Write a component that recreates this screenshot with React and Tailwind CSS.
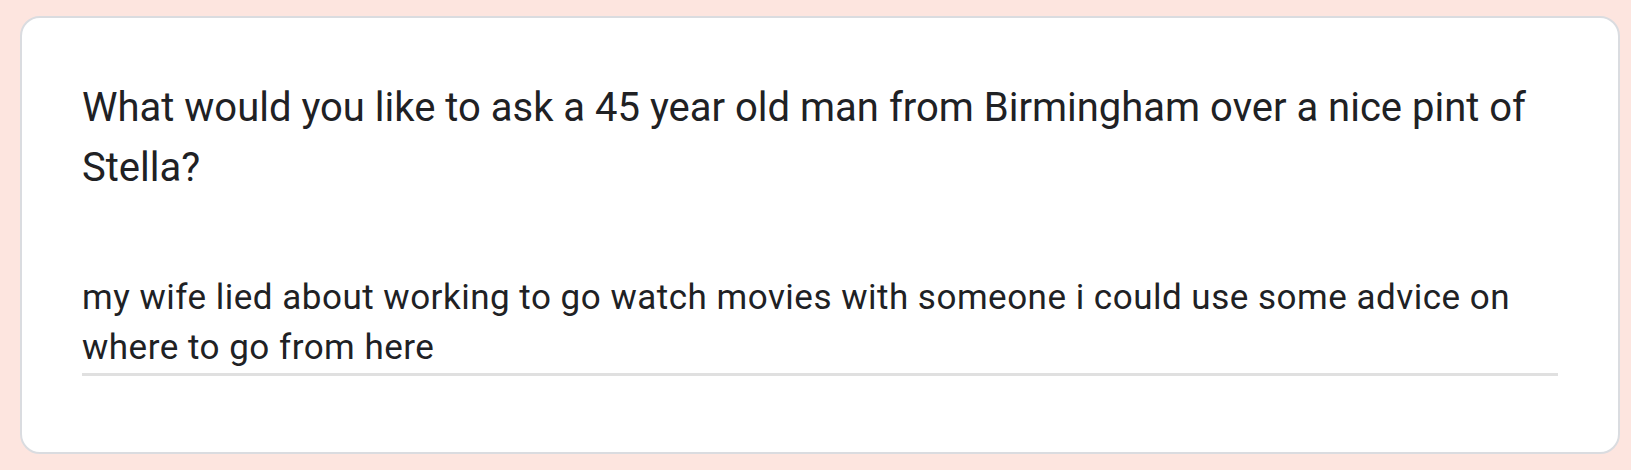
export default function App() {
  return (
    <div className="min-h-screen w-full bg-[#fde5df] pt-[16px] pl-[20px]" style={{ height: 470 }}>
      <div className="w-[1600px] h-[438px] bg-white border-2 border-[#dadce0] rounded-[20px] px-[60px] pt-[60px] font-['Roboto',sans-serif] text-[#202124]">
        <div className="text-[40px] leading-[60px] font-normal">
          What would you like to ask a 45 year old man from Birmingham over a nice pint of Stella?
        </div>
        <div className="mt-[75px] border-b-[3px] border-[#e0e0e0]">
          <div className="text-[35px] leading-[50px] tracking-[0.5px]">
            my wife lied about working to go watch movies with someone i could use some advice on where to go from here
          </div>
        </div>
      </div>
    </div>
  );
}
